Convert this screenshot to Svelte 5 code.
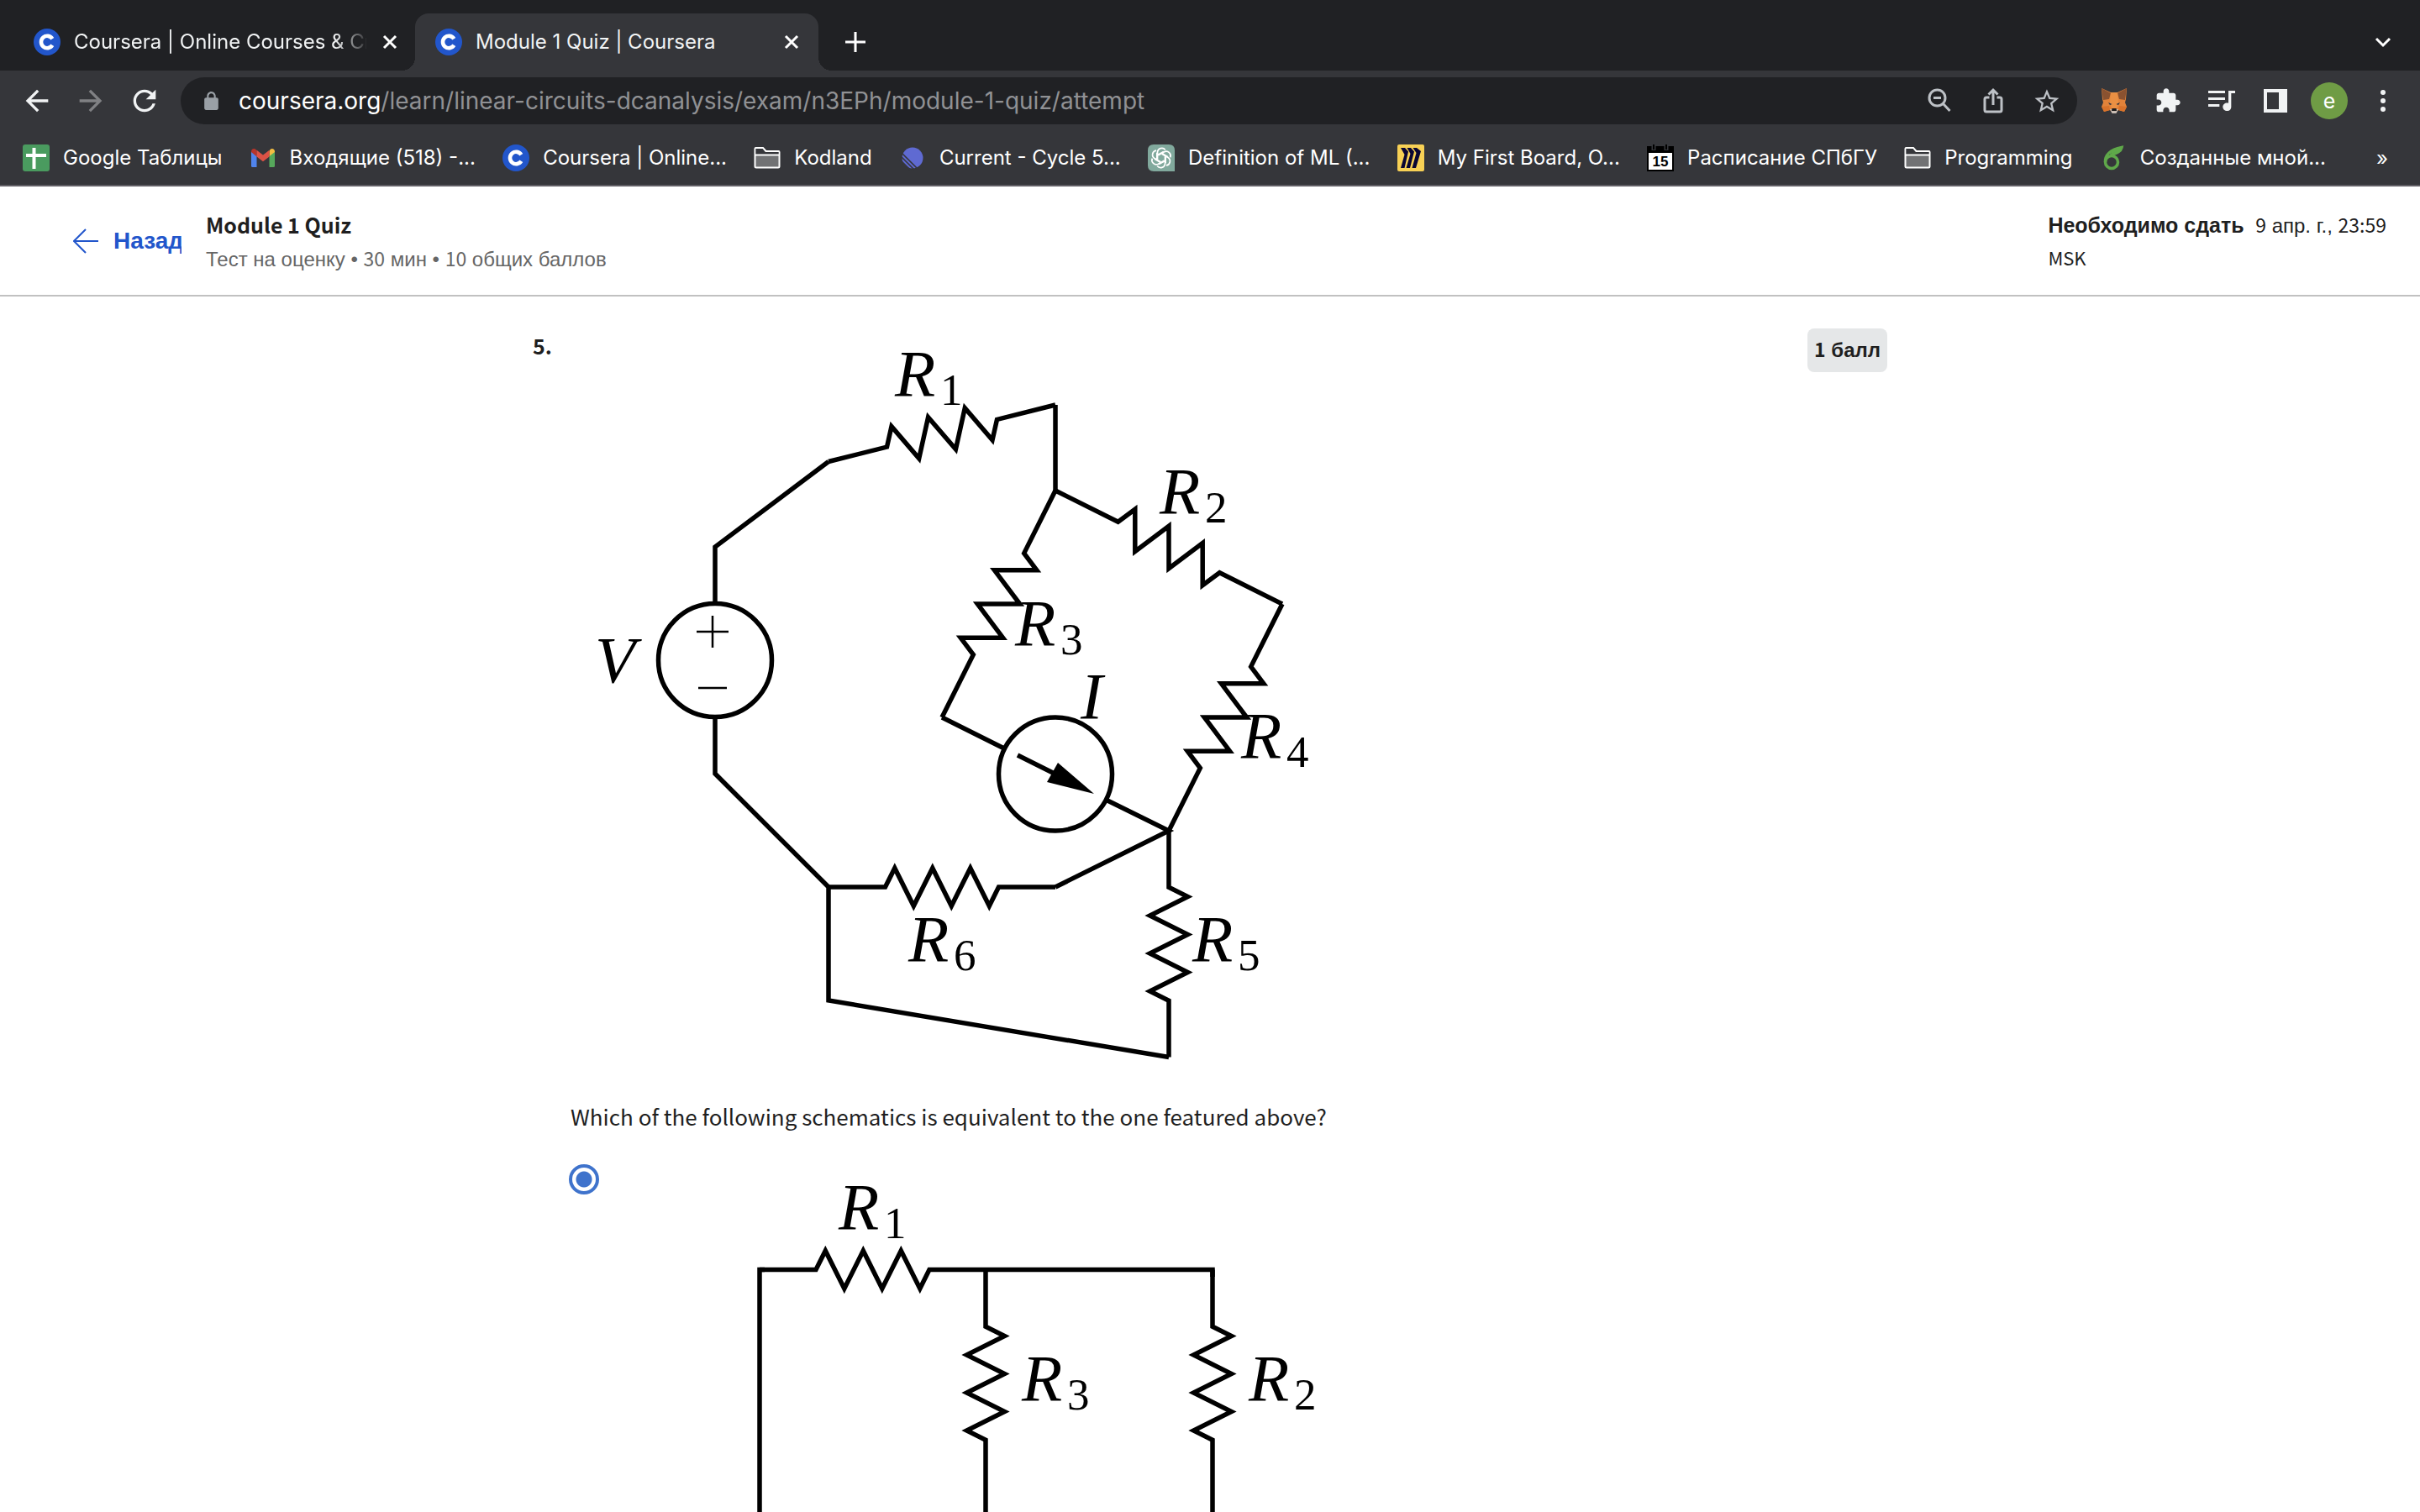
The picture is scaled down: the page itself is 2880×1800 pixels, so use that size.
<script>
  const U = 67.5;
  const text = (p) => p.map((n) => Math.round(n * 10) / 10).join(' ');

  // Wire with a zigzag of fixed length 2U in its middle.
  function resistor(x1, y1, x2, y2) {
    const len = Math.hypot(x2 - x1, y2 - y1);
    const ux = (x2 - x1) / len;
    const uy = (y2 - y1) / len;
    const cx = (x1 + x2) / 2;
    const cy = (y1 + y2) / 2;
    const at = (along, side) => text([cx + ux * along + uy * side, cy + uy * along - ux * side]);
    const pts = [text([x1, y1]), at(-U, 0)];
    for (let i = 0; i < 6; i++) pts.push(at(-U + U / 6 + (i * U) / 3, i % 2 ? -U / 3 : U / 3));
    pts.push(at(U, 0), text([x2, y2]));
    return 'M' + pts.join('L');
  }

  const main = {
    wires: [
      'M851 718V651L986 549.5',
      'M851 854V921L986 1056V1191L1391 1258.5',
      'M1256 482V584',
      'M1121 854L1195 891M1316 952L1391 989L1256 1056',
      resistor(986, 549.5, 1256, 482),
      resistor(1256, 584, 1526, 719),
      resistor(1256, 584, 1121, 854),
      resistor(1526, 719, 1391, 989),
      resistor(1391, 989, 1391, 1258.5),
      resistor(986, 1056, 1256, 1056)
    ],
    labels: [
      ['R', '1', 1065, 471], ['R', '2', 1380, 611], ['R', '3', 1208, 768],
      ['R', '4', 1477, 902], ['R', '5', 1419, 1144], ['R', '6', 1081, 1144],
      ['V', '', 708, 812], ['I', '', 1286, 855]
    ]
  };

  const option = {
    wires: [
      'M904 2050V1511.5H910',
      'M1173 1511.5H1443V1520',
      resistor(904, 1511.5, 1173, 1511.5),
      resistor(1173, 1511.5, 1173, 1782),
      resistor(1443, 1511.5, 1443, 1782),
      'M1173 1782V2050M1443 1782V2050'
    ],
    labels: [['R', '1', 998, 1463], ['R', '3', 1216, 1667], ['R', '2', 1486, 1667]]
  };

  const bookmarks = [
    ['sheets', 'Google Таблицы'], ['gmail', 'Входящие (518) -...'], ['coursera', 'Coursera | Online...'],
    ['folder', 'Kodland'], ['linear', 'Current - Cycle 5...'], ['gpt', 'Definition of ML (...'],
    ['miro', 'My First Board, O...'], ['calendar', 'Расписание СПбГУ'], ['folder', 'Programming'],
    ['overleaf', 'Созданные мной...']
  ];

  let choice = $state('a');
</script>

{#snippet coursera()}
  <svg class="fav" viewBox="0 0 32 32" aria-hidden="true">
    <circle cx="16" cy="16" r="16" fill="#2256cb" />
    <path d="M22.3 12.2A7.2 7.2 0 1 0 22.3 19.8" fill="none" stroke="#fff" stroke-width="4.6" />
  </svg>
{/snippet}

{#snippet icon(name)}
  {#if name === 'coursera'}
    {@render coursera()}
  {:else}
    <svg class="fav" viewBox="0 0 32 32" aria-hidden="true">
      {#if name === 'sheets'}
        <rect width="32" height="32" rx="3" fill="#4a9b5f" />
        <path d="M13.5 4V29M4 13H28" stroke="#fff" stroke-width="4" />
      {:else if name === 'gmail'}
        <path d="M2 8V25.500Q2 27 3.500 27H8.500V13L2 8Z" fill="#5084ec" />
        <path d="M30 8V25.500Q30 27 28.500 27H23.500V13L30 8Z" fill="#56a85b" />
        <path d="M23.500 8V14L30 9V8.500C30 5 26.500 4 24.500 6Z" fill="#f3bd42" />
        <path d="M2 9V8.500C2 5 5.500 4 7.500 6L8.500 7V14.500Z" fill="#b6352b" />
        <path d="M8.500 14.500V6.800L16 12.500L23.500 6.800V14.500L16 20.300Z" fill="#dc5245" />
      {:else if name === 'folder'}
        <path d="M1.500 9V5Q1.500 4 2.500 4H11L14.500 8H29.500Q30.500 8 30.500 9V26Q30.500 27.500 29 27.500H3Q1.500 27.500 1.500 26Z" fill="#717274" stroke="#fff" stroke-width="2" />
        <path d="M2.500 5H10.500L13.500 9H29.500V12H2.500Z" fill="#35363a" />
        <path d="M1.500 12.500H30.500" stroke="#fff" stroke-width="2" />
      {:else if name === 'linear'}
        <circle cx="16" cy="16" r="12.500" fill="#5f6ad2" />
        <path d="M3 10L22 29M2 14L18 30M1 18L14 31" stroke="#35363a" stroke-width="1.700" />
      {:else if name === 'gpt'}
        <path d="M7 0H25Q32 0 32 7V32H7Q0 32 0 25V7Q0 0 7 0Z" fill="#81a99d" />
        <g fill="none" stroke="#fff" stroke-width="1.700" stroke-linejoin="round">
          {#each [0, 60, 120, 180, 240, 300] as a}
            <path d="M11.500 17.800V9.300A5.200 5.200 0 0 1 20.800 6.400M11.500 12.600L18.800 8.400" transform="rotate({a} 16 16)" />
          {/each}
        </g>
      {:else if name === 'miro'}
        <rect width="32" height="32" rx="2" fill="#f8d155" />
        <path d="M4 4H9L13 8.500L8.500 28H4L8.500 12ZM11.500 4H16L20 8.500L15 28H10.500L15.500 11ZM18.500 4H23L28 8L22 28H17.500L22.500 10Z" fill="#0a0633" />
      {:else if name === 'calendar'}
        <rect width="32" height="32" fill="#000" />
        <path d="M2 10H30V30H2Z" fill="#fff" />
        <path d="M0 0H32V2H0Z" fill="#35363a" />
        <path d="M8 0V7M23 0V7" stroke="#35363a" stroke-width="5" />
        <path d="M8 0V6M23 0V6" stroke="#000" stroke-width="2" />
        <text x="16" y="26" text-anchor="middle" class="day">15</text>
      {:else}
        <g fill="none" stroke="#5fa84a" stroke-width="3.500">
          <ellipse cx="14" cy="21" rx="7.500" ry="7.500" />
          <path d="M6.500 21C6 13 12 6 26 3.500C25 8 21 10 12.500 12.500" />
        </g>
        <path d="M13 9C15 5 20 3 27 2.500C25 7 21 9 14 10.500Z" fill="#5fa84a" />
      {/if}
    </svg>
  {/if}
{/snippet}

{#snippet schematic(data)}
  <g fill="none" stroke="#000" stroke-width="5.500">
    {#each data.wires as d}<path {d} />{/each}
  </g>
  {#each data.labels as [name, sub, x, y]}
    <text {x} {y} class="sym">{name}</text>
    {#if sub}<text x={x + 54} y={y + 11} class="sub">{sub}</text>{/if}
  {/each}
{/snippet}

<div class="window">
  <div class="tabs">
    <div class="tab">
      {@render coursera()}
      <span class="title fade">Coursera | Online Courses &amp; Cr</span>
      <button class="close" aria-label="Close tab"><svg viewBox="0 0 20 20"><path d="M3 3L17 17M17 3L3 17" /></svg></button>
    </div>
    <div class="tab active">
      {@render coursera()}
      <span class="title">Module 1 Quiz | Coursera</span>
      <button class="close" aria-label="Close tab"><svg viewBox="0 0 20 20"><path d="M3 3L17 17M17 3L3 17" /></svg></button>
    </div>
    <button class="new" aria-label="New tab"><svg viewBox="0 0 24 24"><path d="M12 0V24M0 12H24" /></svg></button>
    <button class="search" aria-label="Search tabs"><svg viewBox="0 0 20 20"><path d="M2 6L10 14L18 6" /></svg></button>
  </div>

  <div class="toolbar">
    <nav class="nav">
      <button aria-label="Back"><svg viewBox="0 0 24 24"><path d="M20 11H7.830l5.590-5.590L12 4l-8 8 8 8 1.410-1.410L7.830 13H20v-2z" /></svg></button>
      <button class="dim" aria-label="Forward"><svg viewBox="0 0 24 24"><path d="M12 4l-1.410 1.410L16.170 11H4v2h12.170l-5.580 5.590L12 20l8-8z" /></svg></button>
      <button aria-label="Reload"><svg viewBox="0 0 24 24"><path d="M17.650 6.350C16.200 4.900 14.210 4 12 4c-4.420 0-7.990 3.580-7.990 8s3.570 8 7.990 8c3.730 0 6.840-2.550 7.730-6h-2.080c-.82 2.330-3.040 4-5.650 4-3.310 0-6-2.690-6-6s2.690-6 6-6c1.660 0 3.140.69 4.220 1.780L13 11h7V4l-2.350 2.350z" /></svg></button>
    </nav>
    <div class="omnibox">
      <svg class="lock" viewBox="0 0 24 24"><path d="M18 8h-1V6c0-2.760-2.240-5-5-5S7 3.240 7 6v2H6c-1.100 0-2 .9-2 2v10c0 1.100.9 2 2 2h12c1.100 0 2-.9 2-2V10c0-1.100-.9-2-2-2zm-9 0V6c0-1.660 1.340-3 3-3s3 1.340 3 3v2H9z" /></svg>
      <div class="url"><b>coursera.org</b>/learn/linear-circuits-dcanalysis/exam/n3EPh/module-1-quiz/attempt</div>
      <button aria-label="Zoom"><svg class="line" viewBox="0 0 32 32"><circle cx="13.500" cy="12.500" r="9.500" /><path d="M20.500 19.500L28.500 28M9 12.500H18" /></svg></button>
      <button aria-label="Share"><svg class="line" viewBox="0 0 32 32"><path d="M11.500 12H8Q6 12 6 14V27Q6 29 8 29H24Q26 29 26 27V14Q26 12 24 12H20.500M16 21V4M10.500 8.500L16 3L21.500 8.500" /></svg></button>
      <button aria-label="Bookmark"><svg viewBox="0 0 24 24"><path d="M22 9.240l-7.190-.62L12 2 9.190 8.630 2 9.240l5.460 4.730L5.820 21 12 17.270 18.180 21l-1.630-7.030L22 9.240zM12 15.400l-3.760 2.270 1-4.280-3.320-2.880 4.380-.38L12 6.100l1.710 4.040 4.380.38-3.320 2.880 1 4.280L12 15.400z" transform="translate(-1 -.5) scale(1.080)" /></svg></button>
    </div>
    <div class="tools">
      <button aria-label="MetaMask">
        <svg viewBox="0 0 32 32">
          <path d="M1 1L12 6H20L31 1L30 14L29 18L31 23L28 29L21 27L18 30H14L11 27L4 29L1 23L3 18L2 14Z" fill="#e2833a" />
          <path d="M1 1L12 7L10 14L3 15ZM31 1L20 7L22 14L29 15Z" fill="#8a5230" />
          <path d="M12 6H20L21 18L19 25H13L11 18Z" fill="#ea9043" />
          <path d="M1 23L10 22L11 27L4 29ZM31 23L22 22L21 27L28 29Z" fill="#d9732b" />
          <path d="M9 18L13.500 20L11 21ZM23 18L18.500 20L21 21Z" fill="#263040" />
          <path d="M11 26H21L18.500 31H13.500Z" fill="#c9bdb3" />
          <path d="M13.500 25H18.500L19 28H13Z" fill="#1c1a1a" />
        </svg>
      </button>
      <button aria-label="Extensions"><svg viewBox="0 0 24 24"><path d="M20.500 11H19V7c0-1.100-.9-2-2-2h-4V3.500C13 2.120 11.880 1 10.500 1S8 2.120 8 3.500V5H4c-1.100 0-1.990.9-1.990 2v3.800H3.500c1.490 0 2.700 1.210 2.700 2.700s-1.210 2.700-2.700 2.700H2V20c0 1.100.9 2 2 2h3.800v-1.500c0-1.490 1.210-2.700 2.700-2.700 1.490 0 2.700 1.210 2.700 2.700V22H17c1.100 0 2-.9 2-2v-4h1.500c1.380 0 2.500-1.120 2.500-2.500S21.880 11 20.500 11z" /></svg></button>
      <button aria-label="Media"><svg viewBox="0 0 24 24"><path d="M15 3H0v2.200h15V3zm0 6H0v2.200h15V9zM0 17.200h10V15H0v2.200zM18 3v11c-.4-.1-.7-.2-1-.2-2.300 0-4 1.600-4 3.600s1.700 3.600 3.900 3.600 3.600-1.600 3.600-3.600V5.200H24V3h-6z" /></svg></button>
      <button aria-label="Side panel"><svg viewBox="0 0 32 32"><path fill-rule="evenodd" d="M2 2H30V30H2ZM6 6V26H20V6Z" /></svg></button>
      <button class="avatar" aria-label="Profile">e</button>
      <button aria-label="Menu"><svg viewBox="0 0 32 32"><circle cx="16" cy="6" r="3" /><circle cx="16" cy="16" r="3" /><circle cx="16" cy="26" r="3" /></svg></button>
    </div>
  </div>

  <nav class="bookmarks">
    <div class="marks">
      {#each bookmarks as [name, label]}
        <a href="#{name}">{@render icon(name)}<span>{label}</span></a>
      {/each}
    </div>
    <button aria-label="More bookmarks">»</button>
  </nav>

  <header>
    <a class="back" href="#back">
      <svg viewBox="0 0 30 30"><path d="M15 1L1 15L15 29M1 15H30" /></svg>
      <span>Назад</span>
    </a>
    <div class="heading">
      <h1>Module 1 Quiz</h1>
      <p>Тест на оценку • <span class="src">30</span> мин • <span class="src">10</span> общих баллов</p>
    </div>
    <div class="due">
      <strong>Необходимо сдать</strong>
      <span><span class="src">9</span> апр. г., <span class="src">23:59</span></span>
      <div class="zone">MSK</div>
    </div>
  </header>

  <main>
    <section class="question">
      <div class="number">5.</div>
      <div class="body">
        <svg class="circuit" viewBox="679 402 900 880" role="img" aria-label="Circuit with resistors R1 to R6, voltage source V and current source I">
          {@render schematic(main)}
          <g fill="none" stroke="#000" stroke-width="5.500">
            <circle cx="851" cy="786" r="67.500" />
            <circle cx="1256" cy="921.500" r="67.500" />
            <path d="M1211 899L1255 921" />
            <path d="M829 752H867M848 733V771M831 819H865" stroke-width="2.500" />
          </g>
          <path d="M1259 908L1302 945L1246 931Z" />
        </svg>
        <p>Which of the following schematics is equivalent to the one featured above?</p>
        <label class="option">
          <input type="radio" name="answer" value="a" bind:group={choice} />
          <svg class="circuit" viewBox="730 1386 850 620" role="img" aria-label="Schematic with R1, R3 and R2">
            {@render schematic(option)}
          </svg>
        </label>
      </div>
      <div class="points"><span class="src">1</span> балл</div>
    </section>
  </main>
</div>

<style>
  :global(body) { margin: 0; background: #fff; }
  .window { height: 100vh; display: flex; flex-direction: column; overflow: hidden; font-family: Inter, "Liberation Sans", sans-serif; color: #1f1f1f; }
  button { background: none; border: 0; padding: 0; margin: 0; color: inherit; font: inherit; display: flex; align-items: center; justify-content: center; }
  svg { display: block; flex: none; }
  .fav { width: 32px; height: 32px; }
  .day { font: 700 17px "Liberation Sans", sans-serif; fill: #000; }

  .tabs { background: #202124; height: 68px; padding: 16px 26px 0 14px; display: flex; color: #f1f3f4; font-size: 24px; flex: none; }
  .tab { width: 480px; box-sizing: border-box; padding: 0 20px 0 24px; display: flex; align-items: center; gap: 16px; position: relative; }
  .tab:first-child { padding: 0 18px 0 26px; }
  .active { background: #35363a; border-radius: 16px 16px 0 0; }
  .active::before, .active::after { content: ""; position: absolute; bottom: 0; width: 16px; height: 16px; }
  .active::before { right: 100%; background: radial-gradient(circle at 0 0, transparent 16px, #35363a 16px); }
  .active::after { left: 100%; background: radial-gradient(circle at 100% 0, transparent 16px, #35363a 16px); }
  .title { flex: 1; min-width: 0; white-space: nowrap; line-height: 32px; }
  .fade { mask-image: linear-gradient(90deg, #000 310px, transparent 352px); }
  .close svg { width: 20px; height: 20px; }
  .tabs button path { fill: none; stroke: #fff; stroke-width: 3; }
  .close { width: 24px; height: 32px; }
  .new { margin-left: 32px; width: 24px; }
  .new svg { width: 24px; }
  .search { margin-left: auto; width: 36px; }
  .search svg { width: 20px; }

  .toolbar { background: #35363a; height: 72px; display: flex; align-items: center; padding: 0 22px; flex: none; color: #f1f3f4; }
  .nav { display: flex; gap: 24px; padding: 0 23px 0 2px; }
  .nav svg { width: 40px; height: 40px; }
  .toolbar svg { fill: currentColor; }
  .dim { color: #808184; }
  .omnibox { flex: 1; height: 56px; border-radius: 28px; background: #202124; display: flex; align-items: center; padding: 0 20px 0 24px; color: #bdc1c6; }
  .lock { width: 25px; height: 25px; color: #9aa0a6; }
  .url { flex: 1; margin-left: 20px; font-size: 28px; color: #909194; white-space: nowrap; }
  .url b { font-weight: 400; color: #fff; }
  .omnibox button { margin-left: 32px; }
  .omnibox button svg { width: 32px; height: 32px; }
  .toolbar .line { fill: none; stroke: currentColor; stroke-width: 3; }
  .tools { display: flex; align-items: center; gap: 32px; margin-left: 28px; margin-right: 6px; }
  .tools svg { width: 32px; height: 32px; }
  .avatar { width: 44px; height: 44px; margin: 0 -6px; border-radius: 50%; background: #6f9c45; color: #fff; font-size: 25px; }

  .bookmarks { background: #35363a; height: 64px; border-bottom: 2px solid #605e64; display: flex; align-items: center; gap: 60px; padding: 0 38px 0 27px; color: #fff; font-size: 24px; flex: none; }
  .marks { flex: 1; display: flex; justify-content: space-between; }
  .marks a { display: flex; align-items: center; gap: 16px; color: inherit; text-decoration: none; white-space: nowrap; line-height: 32px; }

  header { height: 129px; border-bottom: 2px solid #c1c1c1; padding: 0 40px 0 87px; display: flex; align-items: flex-start; flex: none; font-family: "Liberation Sans", sans-serif; }
  .src, .zone, h1, .number, .body { font-family: "Noto Sans CJK SC", "Noto Sans", sans-serif; }
  .back { display: flex; align-items: center; gap: 18px; margin-top: 45px; color: #2256cb; text-decoration: none; font-size: 28px; font-weight: 700; line-height: 40px; }
  .back svg { width: 30px; height: 30px; fill: none; stroke: currentColor; stroke-width: 2; }
  .back span { width: 81px; overflow: hidden; }
  .heading { margin-left: 29px; padding-top: 25px; }
  h1 { margin: 0; font-size: 25px; font-weight: 700; line-height: 40px; }
  p { margin: 0; }
  .heading p { font-size: 24px; line-height: 40px; margin-top: 2px; color: #666; }
  .src { font-size: 23px; line-height: 0; }
  .due { margin-left: auto; padding-top: 27px; font-size: 24px; line-height: 38px; }
  .due strong { margin-right: 7px; font-size: 25px; }
  .zone { font-size: 22px; line-height: 36px; }

  main { flex: 1; min-height: 0; overflow: hidden; }
  .question { max-width: 1612px; margin: 0 auto; padding-top: 38px; display: grid; grid-template-columns: 45px 1fr auto; align-items: start; }
  .number { font-size: 25px; font-weight: 700; line-height: 40px; }
  .body { padding-top: 11px; }
  .circuit { width: 900px; }
  .body p { font-size: 26px; line-height: 40px; margin: 27px 0 37px; }
  .option { display: flex; align-items: flex-start; gap: 17px; margin-left: -2px; }
  .option .circuit { width: 850px; }
  .option input { appearance: none; width: 36px; height: 36px; margin: 0; border: 4px solid #3f73cc; border-radius: 50%; background: radial-gradient(circle, #3f73cc 9px, #fff 10px); flex: none; }
  .points { background: #e5e7e8; border-radius: 8px; padding: 6px 8px; font: 700 24px/40px "Liberation Sans", sans-serif; }
  .sym { font: italic 79px "Liberation Serif", serif; }
  .sub { font: 53px "Liberation Serif", serif; }
</style>
